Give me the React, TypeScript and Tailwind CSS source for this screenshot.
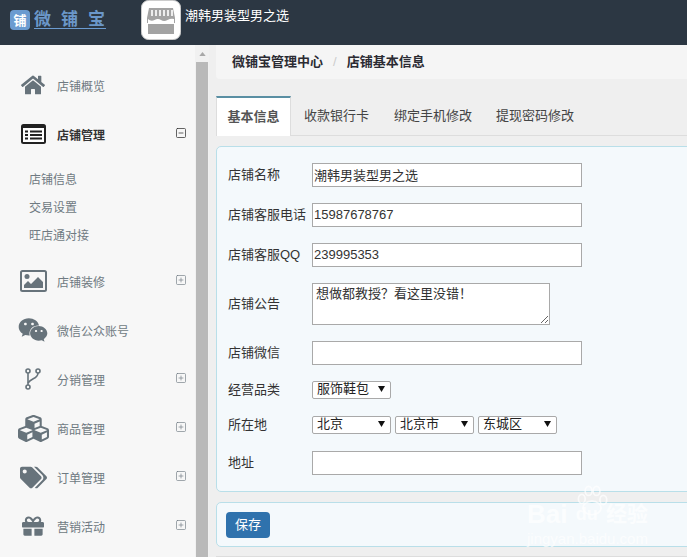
import { SquarePlus, SquareMinus } from 'lucide-react'
import { FaHome, FaWeixin, FaCubes, FaTags, FaGift } from 'react-icons/fa'
import type { ReactNode } from 'react'

function NavItem({ icon, label, active, toggle }: { icon: ReactNode; label: string; active?: boolean; toggle?: 'plus' | 'minus' }) {
  return (
    <div className="flex h-[49px] items-center">
      <div className="flex w-[57px] shrink-0 justify-center pl-[9px] pb-[3px] text-[#67737b]">{icon}</div>
      <span className={active ? 'text-[12px] font-bold text-[#333]' : 'text-[12px] text-[#6f7a82]'}>{label}</span>
      <div className="ml-auto mr-[8px] pb-[6px] text-[#6f7a82]">
        {toggle === 'plus' && <SquarePlus size={12} strokeWidth={1.3} />}
        {toggle === 'minus' && <SquareMinus size={12} strokeWidth={1.5} className="text-[#333]" />}
      </div>
    </div>
  )
}

function Row({ label, children, className }: { label: ReactNode; children: ReactNode; className: string }) {
  return (
    <div className={`flex items-center ${className}`}>
      <label className="w-[84px] shrink-0 text-[13px] leading-[18px] text-[#333]">{label}</label>
      {children}
    </div>
  )
}

function TextInput({ value }: { value?: string }) {
  return (
    <input
      readOnly
      value={value ?? ''}
      className="h-[24px] w-[270px] border border-[#a9a9a9] bg-white px-[1px] pb-[2px] text-[13px] text-[#333] outline-none"
    />
  )
}

function Select({ value, width }: { value: string; width: string }) {
  return (
    <div className={`relative h-[18px] ${width}`}>
      <select className="block h-[18px] w-full appearance-none rounded-[2px] border border-[#a9a9a9] bg-white pb-[2px] pl-[4px] text-[13px] leading-[14px] text-[#222] outline-none">
        <option>{value}</option>
      </select>
      <svg viewBox="0 0 8 8" className="pointer-events-none absolute right-[6px] top-[4px] h-[7px] w-[7px]">
        <path d="M0 1h8L4 8z" fill="#111" />
      </svg>
    </div>
  )
}

function StoreIcon() {
  return (
    <svg viewBox="0 0 40 40" className="h-[40px] w-[40px]">
      <rect x="0.5" y="0.5" width="39" height="39" rx="7" fill="#fff" stroke="#ccc" />
      <path d="M8 8h24l2 10v5H6v-5z" fill="#a3a3a3" />
      <path d="M7 22h26v12H7z" fill="#a3a3a3" />
      <path d="M7 19q3 3 6.500 1t6.500 0 6.500 0 6.500-1v5H7z" fill="#fff" />
      <path d="M11 10v6M15 10v6M19 10v6M23 10v6M27 10v6M31 10v6" stroke="#fff" strokeWidth="1.6" />
    </svg>
  )
}

function ListIcon() {
  return (
    <svg viewBox="0 0 25 20" className="h-[20px] w-[25px]">
      <rect width="25" height="20" rx="2.500" fill="#222" />
      <rect x="2" y="4" width="21" height="14" fill="#fff" />
      <path d="M4 6.500h3v2H4zM4 10h3v2H4zM4 13.500h3v2H4zM9 6.500h12v2H9zM9 10h12v2H9zM9 13.500h12v2H9z" fill="#222" />
    </svg>
  )
}

function ImageIcon() {
  return (
    <svg viewBox="0 0 27 22" className="h-[22px] w-[27px]">
      <rect x="1" y="1" width="25" height="20" rx="1.500" fill="none" stroke="#67737b" strokeWidth="2" />
      <circle cx="7" cy="6.500" r="2.500" fill="#67737b" />
      <path d="M4 18v-3l4-4 3 3 7-7 5 5v6z" fill="#67737b" />
    </svg>
  )
}

function BranchIcon() {
  return (
    <svg viewBox="0 0 16 22" className="h-[22px] w-[16px]" fill="none" stroke="#67737b" strokeWidth="1.6">
      <circle cx="3" cy="3" r="2" />
      <circle cx="13" cy="3" r="2" />
      <circle cx="3" cy="19" r="2" />
      <path d="M3 5v12" />
      <path d="M13 5c0 6-7 5-10 10" />
    </svg>
  )
}

export default function App() {
  const font = "font-['Liberation_Sans','Noto_Sans_CJK_SC',sans-serif]"
  return (
    <div className={`flex h-[557px] w-[687px] flex-col overflow-hidden bg-[#efefef] ${font}`}>
      <header className="flex h-[45px] shrink-0 items-center bg-[#2c3743]">
        <div className="ml-[10px] mb-[5px] flex h-[20px] w-[20px] items-center justify-center rounded-[4px] bg-[#6b9bd0] text-[13px] font-bold leading-none text-white">铺</div>
        <div className="ml-[4px] mb-[5px] h-[18px] w-[72px] whitespace-nowrap border-b border-[#6b9bd0] text-[17px] font-bold leading-[17px] tracking-[10px] text-[#6b97c9]">微铺宝</div>
        <div className="ml-[35px] mb-[5px] h-[40px]"><StoreIcon /></div>
        <span className="ml-[4px] mb-[13px] text-[13px] text-white">潮韩男装型男之选</span>
      </header>

      <div className="flex min-h-0 flex-1">
        <aside className="w-[195px] shrink-0 bg-[#f7f7f7] pt-[17px]">
          <NavItem icon={<FaHome size={24} />} label="店铺概览" />
          <NavItem icon={<ListIcon />} label="店铺管理" active toggle="minus" />
          <div className="mb-[8px] mt-[6px] pl-[29px] text-[12px] text-[#6f7a82]">
            <div className="flex h-[28px] items-center">店铺信息</div>
            <div className="flex h-[28px] items-center">交易设置</div>
            <div className="flex h-[28px] items-center">旺店通对接</div>
          </div>
          <NavItem icon={<ImageIcon />} label="店铺装修" toggle="plus" />
          <NavItem icon={<FaWeixin size={30} />} label="微信公众账号" />
          <NavItem icon={<BranchIcon />} label="分销管理" toggle="plus" />
          <NavItem icon={<FaCubes size={31} />} label="商品管理" toggle="plus" />
          <NavItem icon={<FaTags size={27} />} label="订单管理" toggle="plus" />
          <NavItem icon={<FaGift size={22} />} label="营销活动" toggle="plus" />
        </aside>

        <div className="flex w-[14px] shrink-0 flex-col items-center bg-[#f1f1f1]">
          <svg viewBox="0 0 8 5" className="mt-[7px] h-[4px] w-[7px]"><path d="M4 0l4 5H0z" fill="#a8a8a8" /></svg>
          <div className="mt-[6px] w-[12px] flex-1 bg-[#b9b9b9]" />
        </div>

        <main className="relative min-w-0 flex-1 pl-[7px]">
          <div className="flex h-[34px] items-center gap-[10px] rounded-bl-[4px] bg-[#f5f5f5] pl-[16px] text-[13px] font-bold text-[#2b2b33]">
            <span>微铺宝管理中心</span>
            <span className="font-normal text-[#ccc]">/</span>
            <span>店铺基本信息</span>
          </div>

          <div className="mt-[17px] flex h-[40px] border-b border-[#ddd] text-[13px] text-[#444]">
            <div className="flex h-[40px] w-[75px] items-center justify-center border-x border-[#ddd] border-t-2 border-t-[#5a8fa3] bg-white font-bold text-[#555]">基本信息</div>
            <div className="ml-[13px] flex items-center">收款银行卡</div>
            <div className="ml-[25px] flex items-center">绑定手机修改</div>
            <div className="ml-[24px] flex items-center">提现密码修改</div>
          </div>

          <section className="-mr-[12px] mt-[10px] h-[346px] rounded-[5px] border border-[#b9dfe9] bg-[#f4f9fc] pl-[11px] pt-[16px]">
            <Row label="店铺名称" className="mb-[16px]"><TextInput value="潮韩男装型男之选" /></Row>
            <Row label="店铺客服电话" className="mb-[16px]"><TextInput value="15987678767" /></Row>
            <Row label="店铺客服QQ" className="mb-[16px]"><TextInput value="239995353" /></Row>
            <Row label="店铺公告" className="mb-[16px]">
              <textarea
                readOnly
                value="想做都教授？看这里没错！"
                className="h-[42px] w-[238px] border border-[#a9a9a9] bg-white px-[3px] pt-[2px] text-[13px] leading-[16px] text-[#333] outline-none"
              />
            </Row>
            <Row label="店铺微信" className="mb-[16px]"><TextInput /></Row>
            <Row label="经营品类" className="mb-[17px]"><Select value="服饰鞋包" width="w-[79px]" /></Row>
            <Row label="所在地" className="mb-[17px]">
              <div className="flex gap-[4px]">
                <Select value="北京" width="w-[79px]" />
                <Select value="北京市" width="w-[79px]" />
                <Select value="东城区" width="w-[79px]" />
              </div>
            </Row>
            <Row label="地址" className=""><TextInput /></Row>
          </section>

          <section className="-mr-[12px] mt-[10px] flex h-[45px] items-center rounded-[5px] border border-[#b9dfe9] bg-[#f4f9fc] pl-[9px]">
            <button className="h-[26px] w-[44px] rounded-[4px] bg-[#2f72ad] text-[13px] text-white">保存</button>
          </section>

          <div className="mt-[9px] border-t border-[#ddd]" />

          <div className="absolute left-[318px] top-[438px] w-[121px] text-white/70">
            <svg viewBox="0 0 30 30" className="ml-[48px] h-[34px] w-[34px]" fill="none" stroke="currentColor" strokeWidth="1.5">
              <ellipse cx="15" cy="22" rx="8" ry="6" />
              <ellipse cx="6" cy="14" rx="3" ry="4" />
              <ellipse cx="12" cy="7" rx="3" ry="4" />
              <ellipse cx="19" cy="7" rx="3" ry="4" />
              <ellipse cx="25" cy="15" rx="3" ry="4" />
            </svg>
            <div className="-mt-[15px] flex h-[24px] items-center justify-between whitespace-nowrap font-bold leading-[24px]">
              <span className="text-[26px]">Bai</span>
              <span className="text-[18px]">du</span>
              <span className="text-[21px]">经验</span>
            </div>
            <div className="mt-[5px] whitespace-nowrap text-[15px] leading-[16px]">jingyan.baidu.com</div>
          </div>
        </main>
      </div>
    </div>
  )
}
